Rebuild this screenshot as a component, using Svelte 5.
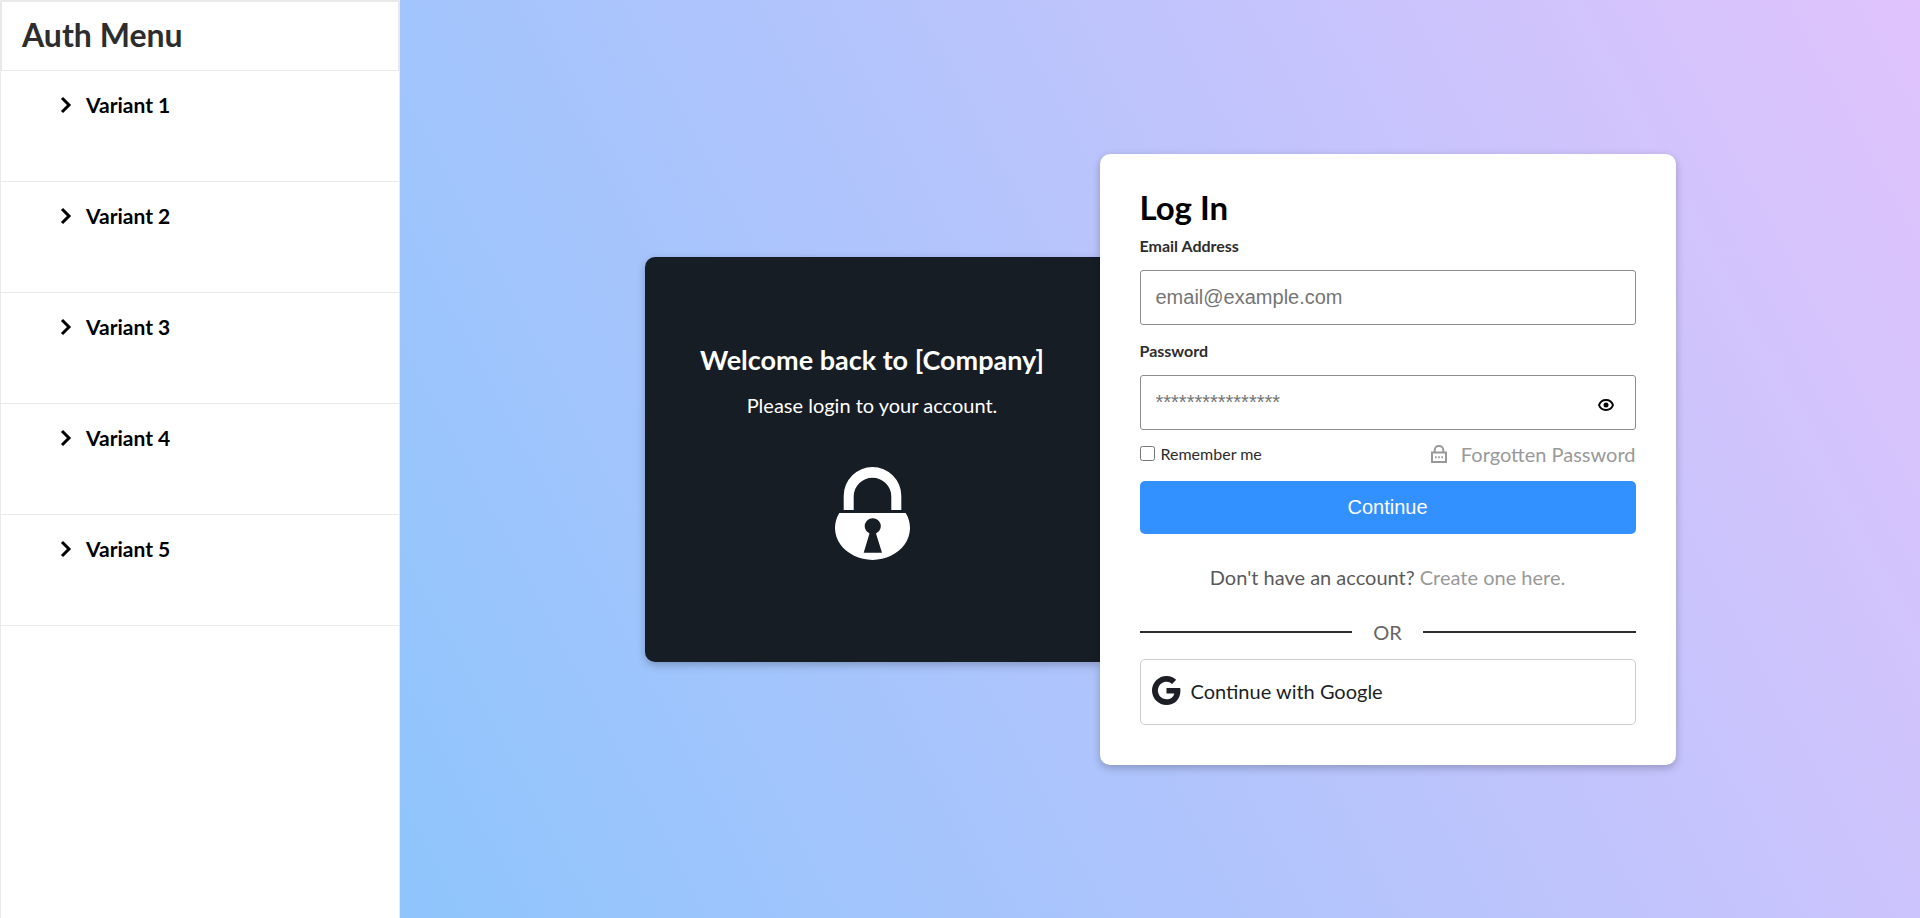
<script lang="ts">
  const variants = ["Variant 1", "Variant 2", "Variant 3", "Variant 4", "Variant 5"];

  let email = $state("");
  let password = $state("");
  let remember = $state(false);
  let showPassword = $state(false);
</script>

<div class="layout">
  <aside class="sidebar">
    <h2 class="sidebar-title">Auth Menu</h2>
    <ul class="variants">
      {#each variants as variant (variant)}
        <li>
          <button type="button" class="variant">
            <svg class="chevron" viewBox="0 0 12 18" aria-hidden="true">
              <path d="M2 2 9 9 2 16" />
            </svg>
            {variant}
          </button>
        </li>
      {/each}
    </ul>
  </aside>

  <main class="content">
    <section class="welcome">
      <h2>Welcome back to [Company]</h2>
      <p>Please login to your account.</p>
      <svg class="padlock" viewBox="0 0 75 93" aria-hidden="true">
        <path d="M8.7 43V28.8a28.8 28.8 0 0 1 57.6 0V43h-10V29.5a18.8 18.8 0 0 0-37.6 0V43z" />
        <path
          fill-rule="evenodd"
          d="M4.3 46h66.4A37.5 32 0 1 1 4.3 46zM34.5 66.5 28.7 85.7h18.3L41 66.5a8 8 0 1 0-6.5 0z"
        />
      </svg>
    </section>

    <form class="login" onsubmit={(e) => e.preventDefault()}>
      <h1>Log In</h1>

      <label class="field-label" for="email">Email Address</label>
      <input id="email" class="field" type="email" placeholder="email@example.com" bind:value={email} />

      <label class="field-label second" for="password">Password</label>
      <div class="password">
        <input
          id="password"
          class="field"
          type={showPassword ? "text" : "password"}
          placeholder="****************"
          bind:value={password}
        />
        <button
          type="button"
          class="reveal"
          aria-label="Show password"
          onclick={() => (showPassword = !showPassword)}
        >
          <svg viewBox="0 0 24 24" aria-hidden="true">
            <path class="eye" d="M5 12c1.2-3.2 3.9-5 7-5s5.8 1.8 7 5c-1.2 3.2-3.9 5-7 5s-5.8-1.8-7-5z" />
            <circle cx="12" cy="12" r="2.5" />
          </svg>
        </button>
      </div>

      <div class="options">
        <label class="remember">
          <input type="checkbox" bind:checked={remember} />
          Remember me
        </label>
        <a class="forgot" href="#forgot">
          <svg viewBox="0 0 16 18" aria-hidden="true">
            <path d="M1 7.5h14V17H1zM3.7 7.5V5.2a4.300 4.300 0 0 1 8.600 0v2.300" />
            <path class="dots" d="M4 12.200h1.600M7.200 12.200h1.600M10.400 12.200H12" />
          </svg>
          Forgotten Password
        </a>
      </div>

      <button type="submit" class="submit">Continue</button>

      <p class="signup">Don't have an account? <a href="#create">Create one here.</a></p>

      <div class="divider">OR</div>

      <button type="button" class="google">
        <svg viewBox="0 0 16 16" aria-hidden="true">
          <path
            d="M15.545 6.558a9.42 9.42 0 0 1 .139 1.626c0 2.434-.87 4.492-2.384 5.885C11.978 15.292 10.158 16 8 16A8 8 0 1 1 8 0a7.689 7.689 0 0 1 5.352 2.082l-2.284 2.284A4.347 4.347 0 0 0 8 3.166c-2.087 0-3.86 1.408-4.492 3.304a4.792 4.792 0 0 0 0 3.063c.635 1.893 2.405 3.301 4.492 3.301 1.078 0 2.004-.276 2.722-.764a3.702 3.702 0 0 0 1.599-2.431H8V6.558z"
          />
        </svg>
        Continue with Google
      </button>
    </form>
  </main>
</div>

<style>
  :global(body) {
    margin: 0;
  }

  .layout {
    display: flex;
    min-height: 100vh;
    font-family: Lato, "Open Sans", sans-serif;
    font-size: 20px;
    line-height: 24px;
  }

  .layout *,
  .layout {
    box-sizing: border-box;
  }

  h1,
  h2,
  p {
    margin: 0;
  }

  a {
    color: #999;
    text-decoration: none;
  }

  button {
    font: inherit;
    cursor: pointer;
  }

  .sidebar {
    flex: 0 0 400px;
    background: #fff;
    border: 1px solid #e9e9e9;
    border-bottom: none;
  }

  .sidebar-title {
    padding: 17px 20px 19px;
    border: 1px solid #e9e9e9;
    font-size: 32px;
    line-height: 32px;
    color: #2d2d2d;
  }

  .variants {
    list-style: none;
    margin: 0;
    padding: 0;
  }

  .variants li {
    height: 111px;
    border-bottom: 1px solid #e9e9e9;
  }

  .variant {
    display: flex;
    align-items: center;
    gap: 14px;
    width: 100%;
    padding: 22px 0 0 59px;
    border: none;
    background: none;
    color: #000;
    font-size: 21px;
    font-weight: 700;
    text-align: left;
  }

  .chevron {
    width: 12px;
    height: 18px;
    fill: none;
    stroke: #000;
    stroke-width: 3;
  }

  .content {
    flex: 1;
    display: flex;
    align-items: center;
    justify-content: center;
    padding: 20px;
    background: linear-gradient(62deg, #8ec5fc 0%, #e0c3fc 100%);
  }

  .welcome,
  .login {
    box-shadow: 0 3px 8px rgba(0, 0, 0, 0.24);
  }

  .welcome {
    flex: 0 1 455px;
    padding: 88px 40px 102px;
    border-radius: 10px 0 0 10px;
    background: #171d25;
    color: #fff;
    text-align: center;
  }

  .welcome h2 {
    margin-bottom: 18px;
    font-size: 27px;
    line-height: 30px;
  }

  .padlock {
    display: block;
    width: 75px;
    height: 93px;
    margin: 50px auto 0;
    fill: #fff;
  }

  .login {
    position: relative;
    flex: 0 1 576px;
    display: flex;
    flex-direction: column;
    padding: 40px;
    border-radius: 10px;
    background: #fff;
  }

  h1 {
    margin-bottom: 18px;
    font-size: 33px;
    line-height: 26px;
    color: #000;
  }

  .field-label {
    margin-bottom: 16px;
    font-size: 16px;
    line-height: 16px;
    font-weight: 700;
    color: #2d2d2d;
  }

  .field-label.second {
    margin-top: 18px;
  }

  .field {
    width: 100%;
    height: 55px;
    padding: 0 15px;
    border: 1px solid #8c8c8c;
    border-radius: 3px;
    background: #fff;
    font-family: "Liberation Sans", Arial, sans-serif;
    font-size: 20px;
  }

  .field::placeholder {
    color: #757575;
  }

  .password {
    position: relative;
    display: flex;
  }

  .reveal {
    position: absolute;
    top: 18px;
    right: 18px;
    width: 24px;
    height: 24px;
    padding: 0;
    border: none;
    background: none;
  }

  .reveal svg {
    display: block;
  }

  .eye {
    fill: none;
    stroke: #000;
    stroke-width: 2;
  }

  .options {
    display: flex;
    align-items: center;
    justify-content: space-between;
    margin: 12px 0 15px;
  }

  .remember {
    display: flex;
    align-items: center;
    gap: 6px;
    font-size: 16px;
    color: #2d2d2d;
  }

  .remember input {
    width: 15px;
    height: 15px;
    margin: 0;
  }

  .forgot {
    display: flex;
    align-items: center;
    gap: 14px;
  }

  .forgot svg {
    width: 16px;
    height: 18px;
    fill: none;
    stroke: #999;
    stroke-width: 2;
  }

  .submit {
    height: 53px;
    border: none;
    border-radius: 5px;
    background: #3390ff;
    color: #fff;
    font-family: "Liberation Sans", Arial, sans-serif;
  }

  .signup {
    margin: 31px 0;
    text-align: center;
    color: #5a5a5a;
  }

  .divider {
    display: flex;
    align-items: center;
    gap: 21px;
    margin-bottom: 15px;
    color: #666;
  }

  .divider::before,
  .divider::after {
    content: "";
    flex: 1;
    height: 2px;
    background: #2d2d2d;
  }

  .google {
    display: flex;
    align-items: center;
    gap: 10px;
    height: 66px;
    padding: 0 11px 2px;
    border: 1px solid #ccc;
    border-radius: 5px;
    background: #fff;
    color: #1c1f26;
  }

  .google svg {
    width: 29px;
    height: 29px;
    fill: #1c1f26;
  }
</style>
